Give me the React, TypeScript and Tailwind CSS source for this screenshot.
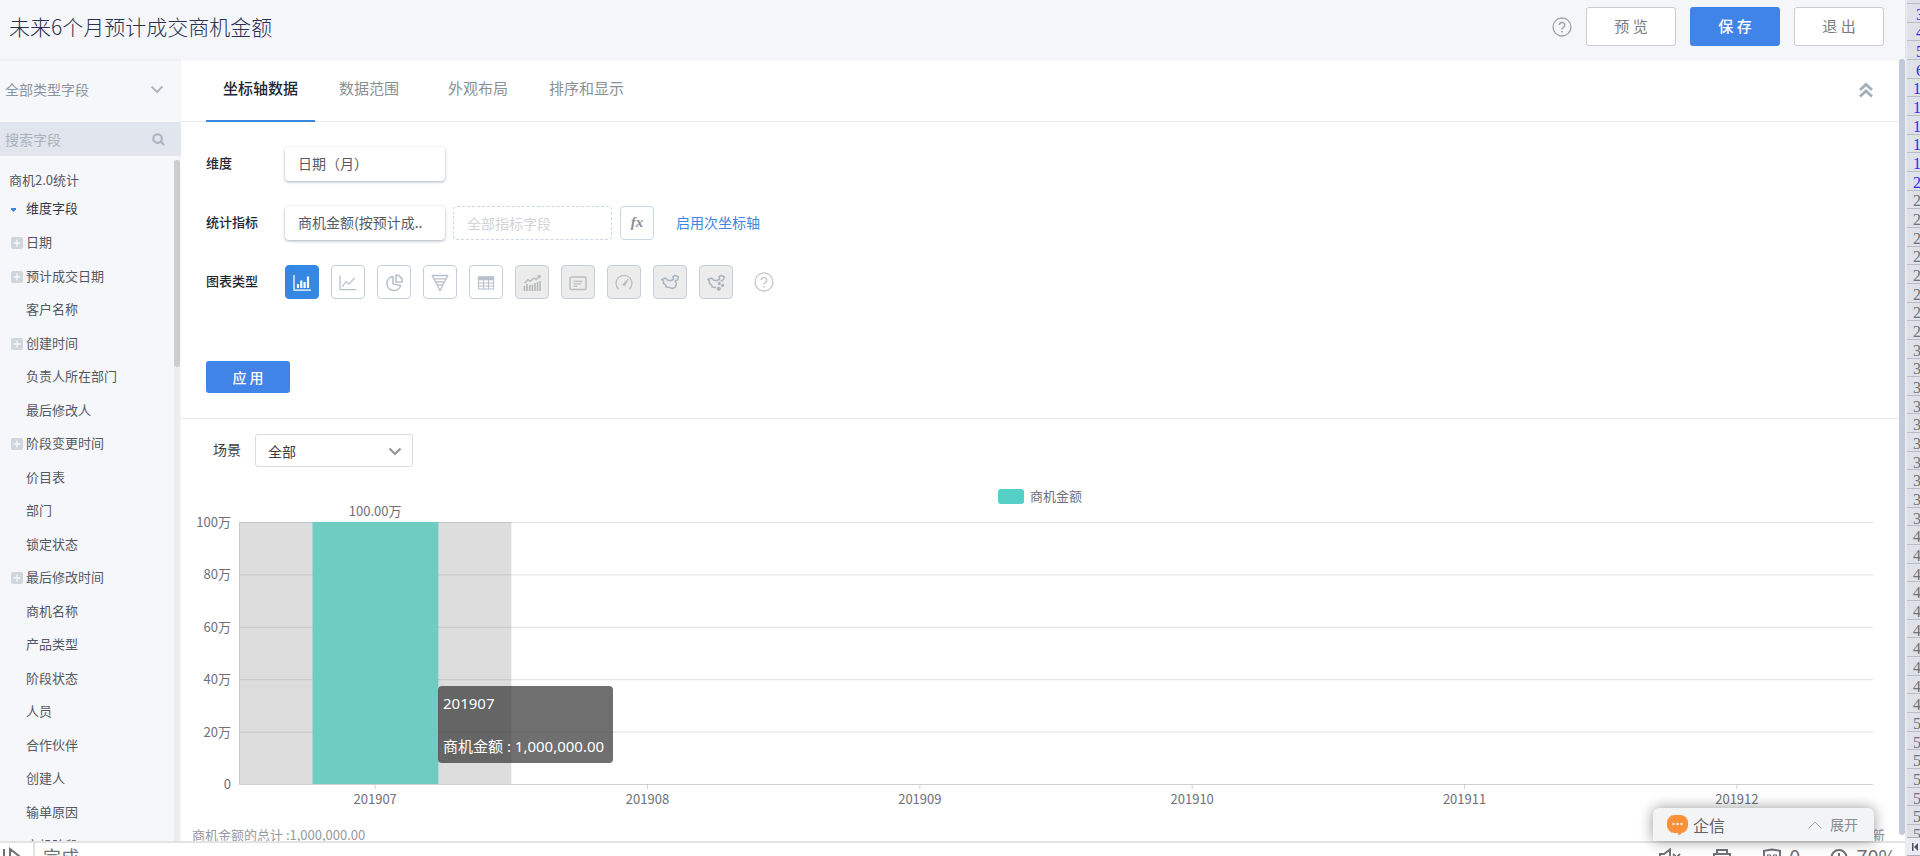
import type { ReactNode } from "react";

type Field = { name: string; expandable?: boolean };

const fields: Field[] = [
  { name: "日期", expandable: true },
  { name: "预计成交日期", expandable: true },
  { name: "客户名称" },
  { name: "创建时间", expandable: true },
  { name: "负责人所在部门" },
  { name: "最后修改人" },
  { name: "阶段变更时间", expandable: true },
  { name: "价目表" },
  { name: "部门" },
  { name: "锁定状态" },
  { name: "最后修改时间", expandable: true },
  { name: "商机名称" },
  { name: "产品类型" },
  { name: "阶段状态" },
  { name: "人员" },
  { name: "合作伙伴" },
  { name: "创建人" },
  { name: "输单原因" },
  { name: "商机阶段" },
];

const tabs = ["坐标轴数据", "数据范围", "外观布局", "排序和显示"];

const months = ["201907", "201908", "201909", "201910", "201911", "201912"];
const ticks = ["100万", "80万", "60万", "40万", "20万", "0"];

const blueRows = ["3", "4", "5", "6", "1", "1", "1", "1", "1", "2"];
const greyRows = [
  ...Array<string>(8).fill("2"),
  ...Array<string>(10).fill("3"),
  ...Array<string>(10).fill("4"),
  ...Array<string>(6).fill("5"),
];

function Icon({ children }: { children: ReactNode }) {
  return (
    <svg
      width="18"
      height="18"
      viewBox="0 0 18 18"
      fill="none"
      stroke="currentColor"
      strokeWidth="1.3"
      strokeLinecap="round"
      strokeLinejoin="round"
      aria-hidden="true"
      className="mt-[2px] shrink-0"
    >
      {children}
    </svg>
  );
}

const chartTypes: { label: string; state: "active" | "normal" | "off"; icon: ReactNode }[] = [
  {
    label: "柱状图",
    state: "active",
    icon: (
      <>
        <path d="M1 1.500v14.700h16.500" />
        <path d="M5 14v-4M8.300 14V6.500M11.600 14V8M15 14V2.500" strokeWidth="2.200" strokeLinecap="butt" />
      </>
    ),
  },
  {
    label: "折线图",
    state: "normal",
    icon: <path d="M1 2v13.600h16M3.500 12.300l3.600-4.600 3 2.400 5-5.800" />,
  },
  {
    label: "饼图",
    state: "normal",
    icon: (
      <g strokeWidth="1.600">
        <path d="M8 2.500A7 7 0 1 0 15.600 11.500L8 10Z" />
        <path d="M11 1V8h6.400A6.500 6.500 0 0 0 11 1Z" />
      </g>
    ),
  },
  {
    label: "漏斗图",
    state: "normal",
    icon: <path d="M1.200 1.500h15.600L9 16.800ZM3 4.800h12M4.600 8h8.800M6.300 11h5.400" />,
  },
  {
    label: "表格",
    state: "normal",
    icon: (
      <>
        <path d="M1.500 3h15v12h-15ZM1.500 9h15M1.500 12h15M6.500 6v9M11.500 6v9" strokeWidth="1.100" />
        <path d="M1.500 3h15v2.500h-15Z" fill="currentColor" />
      </>
    ),
  },
  {
    label: "组合图",
    state: "off",
    icon: (
      <>
        <path d="M2 8.700 5 5.500l2 1.800L11 4l2 1.600L16.600 2.400" strokeWidth="1.500" />
        <circle cx="16.200" cy="2.600" r="1.100" fill="currentColor" />
        <path
          d="M1.500 17v-5M4.100 17v-7M6.700 17v-6M9.300 17v-6.500M11.900 17V9M14.500 17V8M17.100 17V7"
          strokeWidth="1.800"
          strokeLinecap="butt"
        />
      </>
    ),
  },
  {
    label: "指标卡",
    state: "off",
    icon: (
      <>
        <rect x="1" y="3" width="16" height="12.500" rx="1.500" strokeWidth="1.500" />
        <path d="M5 7.300h8M5 9.800h7M5 12.300h3" strokeWidth="1.200" />
      </>
    ),
  },
  {
    label: "仪表盘",
    state: "off",
    icon: (
      <>
        <path d="M3.400 15A8 8 0 1 1 14.600 15" />
        <path d="M7.800 10.800 13 5.400 9.600 11.600Z" fill="currentColor" strokeWidth="1.200" />
      </>
    ),
  },
  {
    label: "地图",
    state: "off",
    icon: (
      <path
        className="text-[#a9b5c1]"
        strokeWidth="1.500"
        d="M.8 5.500 4.500 4 6.500 6l3 .8L12.600 5.300 11.800 2.800 14 1.500 17.300 2.800 16.600 5.600 14.200 7.200 15.600 10 14.200 13.200 11.200 14.600 8.600 13.400 5.200 13 4.600 10.800 2.200 9.200 2.600 7.200Z"
      />
    ),
  },
  {
    label: "标记地图",
    state: "off",
    icon: (
      <g className="text-[#a9b5c1]">
        <path
          strokeWidth="1.500"
          d="M8.600 13.400 5.200 13 4.600 10.800 2.200 9.200 2.600 7.200.8 5.500 4.500 4 6.500 6l3 .8L12.600 5.300 11.800 2.800 14 1.500 17.300 2.800 16.600 5.600 14.200 7"
        />
        <circle cx="12.200" cy="9.400" r=".9" fill="currentColor" />
        <circle cx="15.600" cy="11.400" r="1" fill="currentColor" />
        <circle cx="11.800" cy="14.800" r="1.400" fill="currentColor" />
      </g>
    ),
  },
];

const chartStyles = {
  active: "bg-[#3487e2] border-[#3487e2] text-white",
  normal: "bg-white border-[#c3cfdc] text-[#b9c2cb]",
  off: "bg-[#ececec] border-[#c3cfdc] text-[#bbbdbf]",
};

function Help({ className }: { className: string }) {
  return (
    <button type="button" aria-label="帮助" className={className}>
      <svg width="20" height="20" viewBox="0 0 20 20" fill="none" stroke="currentColor" strokeWidth="1.300">
        <circle cx="10" cy="10" r="9" />
        <path d="M7.300 8.100a2.700 2.700 0 1 1 4.200 2.200c-1 .7-1.500 1.100-1.500 2.300M10 14v1.400" strokeWidth="1.600" />
      </svg>
    </button>
  );
}

function Chevron({ className }: { className: string }) {
  return (
    <svg width="14" height="14" viewBox="0 0 14 14" fill="none" stroke="currentColor" strokeWidth="2.200" className={className}>
      <path d="M1.500 4.500 7 10l5.500-5.500" />
    </svg>
  );
}

function Sidebar() {
  return (
    <aside className="flex w-[181px] shrink-0 flex-col bg-[#f6f7fa]">
      <button type="button" className="flex h-[63px] shrink-0 items-center justify-between pr-[17px] pb-[3px] pl-[5px] text-sm text-[#8d93a0]">
        全部类型字段
        <Chevron className="text-[#b0b9c3]" />
      </button>
      <label className="flex h-[34px] shrink-0 items-center bg-[#e0e5ee] pr-4 pl-[5px]">
        <input
          type="text"
          aria-label="搜索字段"
          placeholder="搜索字段"
          className="w-0 flex-1 bg-transparent text-sm outline-none placeholder:text-[#aab2bd]"
        />
        <svg width="13" height="13" viewBox="0 0 14 14" fill="none" stroke="#aab4bf" strokeWidth="2.300">
          <circle cx="6" cy="6" r="4.600" />
          <path d="M9.500 9.500l3.600 3.600" />
        </svg>
      </label>
      <div className="flex min-h-0 flex-1 overflow-hidden pt-1">
        <div className="min-w-0 flex-1 pt-[5px] text-[13px] text-[#545861]">
          <div className="flex h-[30px] items-center pl-[9px]">商机2.0统计</div>
          <div className="mb-1 flex h-[26px] items-center gap-[10px] pl-[11px] text-[#33373f]">
            <svg width="5" height="4" viewBox="0 0 5 4" fill="#3a87e0" className="mt-1">
              <path d="M0 0h5v1.500L2.500 4 0 1.500Z" />
            </svg>
            维度字段
          </div>
          <ul>
            {fields.map((f) => (
              <li key={f.name} className="flex items-center gap-[3px] pl-[11px] odd:h-[34px] even:h-[33px]">
                <span className="flex w-3 justify-center">
                  {f.expandable && (
                    <svg width="12" height="12" viewBox="0 0 12 12" className="mt-[2px]">
                      <rect width="12" height="12" rx="2" fill="#d0d6dd" />
                      <path d="M6 2.500v7M2.500 6h7" stroke="#f6f7fa" strokeWidth="1.400" />
                    </svg>
                  )}
                </span>
                {f.name}
              </li>
            ))}
          </ul>
        </div>
        <div className="mr-px w-[6px] bg-[#ededee]">
          <div className="h-[207px] rounded-full bg-[#cdcdcd]" />
        </div>
      </div>
    </aside>
  );
}

function RowLabel({ children }: { children: ReactNode }) {
  return <span className="w-[79px] pb-[2px] font-medium text-[#222730]">{children}</span>;
}

function Config() {
  return (
    <section className="shrink-0 border-b border-[#e9ebed] pb-[25px]">
      <div className="flex h-[63px] items-stretch justify-between border-b border-[#e9ebed] pr-[26px] pl-[25px]">
        <nav className="-mb-px flex text-[15px]">
          {tabs.map((t, i) => (
            <a
              key={t}
              href="#"
              className={
                i === 0
                  ? "mr-1 flex border-b-2 border-[#3a87e0] px-[17px] pt-[18px] leading-[22px] font-medium text-[#222730]"
                  : "flex px-5 pt-[18px] leading-[22px] text-[#8b9096] nth-[3]:px-[29px] last:px-3"
              }
            >
              {t}
            </a>
          ))}
        </nav>
        <button type="button" aria-label="收起" className="text-[#a3b0ba]">
          <svg width="14" height="16" viewBox="0 0 14 16" fill="none" stroke="currentColor" strokeWidth="2.800">
            <path d="M1 8l6-5.600L13 8M1 14.600 7 9l6 5.600" />
          </svg>
        </button>
      </div>

      <div className="flex flex-col gap-[25px] pt-[25px] pl-[25px] text-[13px] text-[#555b66]">
        <div className="flex h-[34px] items-center">
          <RowLabel>维度</RowLabel>
          <button type="button" className="h-[34px] w-[160px] rounded bg-white px-[13px] pb-[2px] text-left font-['Noto_Sans_CJK_TC',sans-serif] text-sm shadow-[0_1px_3px_rgba(60,75,95,0.45)]">
            日期（月）
          </button>
        </div>
        <div className="flex h-[34px] items-center">
          <RowLabel>统计指标</RowLabel>
          <button type="button" className="h-[34px] w-[160px] rounded bg-white px-[13px] pb-[2px] text-left text-sm whitespace-nowrap shadow-[0_1px_3px_rgba(60,75,95,0.45)]">
            商机金额(按预计成..
          </button>
          <input
            type="text"
            aria-label="全部指标字段"
            placeholder="全部指标字段"
            className="ml-2 h-[34px] w-[159px] rounded-sm border border-dashed border-[#ccd6e4] px-[13px] text-sm placeholder:text-[#d0d3d8]"
          />
          <button type="button" className="ml-2 h-[34px] w-[34px] rounded-sm border border-[#c9d6e6] pb-[2px] font-['Liberation_Serif',serif] text-[15px] font-bold text-[#8b8f95] italic">
            fx
          </button>
          <a href="#" className="ml-[22px] pb-[2px] text-sm text-[#3a87e0]">
            启用次坐标轴
          </a>
        </div>
        <div className="flex h-[34px] items-center">
          <RowLabel>图表类型</RowLabel>
          <div className="flex items-center gap-3">
            {chartTypes.map((c) => (
              <button
                key={c.label}
                type="button"
                aria-label={c.label}
                className={`flex h-[34px] w-[34px] items-center justify-center rounded border ${chartStyles[c.state]}`}
              >
                <Icon>{c.icon}</Icon>
              </button>
            ))}
          </div>
          <Help className="ml-[21px] text-[#c9c9c9]" />
        </div>
      </div>
      <button type="button" className="mt-[62px] ml-[25px] block h-8 w-[84px] rounded-[3px] bg-[#4084e8] text-sm font-medium text-white">
        应 用
      </button>
    </section>
  );
}

function Chart() {
  return (
    <div className="relative mr-[26px] ml-[58px] text-[13px]">
      <svg width="100%" height="300" className="block overflow-visible" fontSize="13" fill="#6e7079">
        {ticks.map((t, i) => (
          <g key={t}>
            <line x1="0" x2="100%" y1={i * 52.4 + 0.5} y2={i * 52.4 + 0.5} stroke={i === 5 ? "#cfd0d2" : "#dedede"} />
            <text x="-8" y={i * 52.4 + 5} textAnchor="end">
              {t}
            </text>
          </g>
        ))}
        <line x1="0.5" x2="0.5" y1="0" y2="262" stroke="#e0e0e0" />
        <rect width="16.667%" height="262" fill="#969696" fillOpacity="0.32" />
        <rect x="4.5%" width="7.700%" height="262" fill="#6fccc3" />
        <text x="8.330%" y="-6" textAnchor="middle">
          100.00万
        </text>
        {months.map((m, i) => (
          <g key={m}>
            <line
              x1={`${(i + 0.5) * 16.667}%`}
              x2={`${(i + 0.5) * 16.667}%`}
              y1="262"
              y2="267"
              stroke="#cfd0d2"
            />
            <text x={`${(i + 0.5) * 16.667}%`} y="282" textAnchor="middle">
              {m}
            </text>
          </g>
        ))}
      </svg>
      <div className="absolute top-[164px] left-[199px] flex h-[77px] w-[175px] flex-col justify-between rounded bg-[#323232]/70 px-[5px] py-[5px] font-['Noto_Sans','Noto_Sans_CJK_SC',sans-serif] text-[15px] leading-[24px] whitespace-nowrap text-white">
        <span>201907</span>
        <span>商机金额 : 1,000,000.00</span>
      </div>
    </div>
  );
}

function StatusBar() {
  return (
    <footer className="flex h-[15px] shrink-0 items-start overflow-hidden border-t-2 border-[#e3e3e4] bg-white text-[#717276]">
      <div className="flex h-[26px] w-[35px] shrink-0 items-center border-r-2 border-[#e3e3e4]">
        <svg width="20" height="18" viewBox="0 0 20 18" fill="none" stroke="currentColor" strokeWidth="2">
          <path d="M4 2v14M10 2v14l9-7Z" />
        </svg>
      </div>
      <span className="flex-1 pl-2 text-lg leading-[26px]">完成</span>
      <div className="flex shrink-0 items-center gap-2 pt-1 pr-2 text-xl leading-[20px]">
        <svg width="22" height="18" viewBox="0 0 22 18" fill="none" stroke="currentColor" strokeWidth="2" className="mr-6">
          <path d="M1 6h4l6-4.500v15L5 12H1ZM14 6l7 7M21 6l-7 7" />
        </svg>
        <svg width="18" height="18" viewBox="0 0 18 18" fill="none" stroke="currentColor" strokeWidth="2" className="mr-6">
          <path d="M4 5.500V2h10v3.500M4 14H1V6h16v8h-3M5 11h8v6H5Z" />
        </svg>
        <svg width="18" height="18" viewBox="0 0 18 18" fill="none" stroke="currentColor" strokeWidth="2">
          <path d="M9 1.500 1 2.800v6c0 4 4 7 8 8.200 4-1.200 8-4.200 8-8.200v-6Z" />
          <path d="M4.500 7h3v3h-3ZM10.500 7h3v3h-3Z" strokeWidth="1.200" />
        </svg>
        <span className="mr-[22px]">0</span>
        <svg width="18" height="18" viewBox="0 0 18 18" fill="none" stroke="currentColor" strokeWidth="2">
          <circle cx="9" cy="9.500" r="7.500" />
          <path d="M9 5v5.500h4" />
        </svg>
        <span>70%</span>
      </div>
    </footer>
  );
}

function MessageDock() {
  return (
    <div className="absolute right-[31px] bottom-[15px] flex h-[33px] w-[221px] items-center rounded-t-md bg-[#f3f4f6] pr-4 pl-[14px] shadow-[0_0_14px_rgba(0,0,0,0.4)]">
      <svg width="21" height="20" viewBox="0 0 21 20">
        <path
          d="M7.500 0h6a7.500 7.500 0 0 1 7.500 7.500v3a7.500 7.500 0 0 1-6.500 7.400C14 19.200 12.500 20 11 20l.3-2H7.500A7.500 7.500 0 0 1 0 10.500v-3A7.500 7.500 0 0 1 7.500 0Z"
          fill="#fd9139"
        />
        <path d="M5.500 9h2M9.500 9h2M13.500 9h2" stroke="#fff" strokeWidth="2" />
      </svg>
      <span className="ml-[5px] flex-1 text-base text-[#606266]">企信</span>
      <button type="button" className="flex items-center gap-2 text-sm text-[#8c8e92]">
        <svg width="14" height="8" viewBox="0 0 14 8" fill="none" stroke="#a5a7ab">
          <path d="M.5 7.500 7 1l6.500 6.500" />
        </svg>
        <span className="pb-[2px]">展开</span>
      </button>
    </div>
  );
}

function SheetEdge() {
  return (
    <div
      aria-hidden="true"
      className="flex w-[15px] shrink-0 flex-col overflow-hidden border-l-2 border-[#e9ebee] bg-[#dee1e7] font-['Liberation_Serif',serif] text-base"
    >
      <div className="h-1 shrink-0 border-b border-[#b9bdc6]" />
      <div className="grid min-h-0 flex-1 auto-rows-fr">
        {blueRows.map((n, i) => (
          <div
            key={i}
            className={`flex min-h-0 items-center border-b border-[#b9bdc6] pt-[3px] leading-[15px] text-[#2f2ff5] ${i < 4 ? "pl-[9px]" : "pl-[6px]"}`}
          >
            {n}
          </div>
        ))}
        {greyRows.map((n, i) => (
          <div key={i} className="flex min-h-0 items-center border-b border-[#b9bdc6] pt-[3px] pl-[6px] leading-[15px] text-[#6f7277]">
            {n}
          </div>
        ))}
      </div>
      <div className="h-3 shrink-0 overflow-hidden pl-[6px] leading-5 text-[#6f7277]">5</div>
      <div className="flex h-[19px] shrink-0 items-center border-y border-[#a8afbd] bg-[#e9ecf2] pl-[5px]">
        <svg width="6" height="8" viewBox="0 0 6 8" fill="#4d5460">
          <path d="M0 0h1.500v8H0ZM6 0v8L2 4Z" />
        </svg>
      </div>
    </div>
  );
}

export default function App() {
  return (
    <div className="flex h-screen overflow-hidden bg-white font-['Noto_Sans_CJK_SC',sans-serif]">
      <div className="relative flex min-w-0 flex-1 flex-col">
        <header className="z-10 flex h-[59px] shrink-0 items-center bg-[#f4f6fa] pr-[21px] pb-[6px] pl-[9px] shadow-[0_1px_3px_rgba(0,0,0,0.06)]">
          <h1 className="flex-1 text-[21px] font-light text-[#2b3050]">未来6个月预计成交商机金额</h1>
          <Help className="mr-[14px] text-[#a3a3a5]" />
          <div className="flex gap-[14px] text-[15px]">
            <button type="button" className="h-[39px] w-[90px] rounded-[3px] border border-[#cbcccf] bg-white text-[#7a7c80]">
              预 览
            </button>
            <button type="button" className="h-[39px] w-[90px] rounded-[3px] bg-[#4084e8] font-medium text-white">
              保 存
            </button>
            <button type="button" className="h-[39px] w-[90px] rounded-[3px] border border-[#cbcccf] bg-white text-[#7a7c80]">
              退 出
            </button>
          </div>
        </header>

        <div className="flex min-h-0 flex-1">
          <Sidebar />
          <main className="flex min-w-0 flex-1 flex-col overflow-hidden">
            <Config />
            <div className="flex items-center gap-[14px] pt-[15px] pl-8 text-sm text-[#3a3d42]">
              <label htmlFor="scene" className="pb-[3px]">
                场景
              </label>
              <div className="relative flex items-center">
                <select id="scene" className="h-[33px] w-[158px] appearance-none rounded-[3px] border border-[#d9dadc] bg-white px-3 text-sm">
                  <option>全部</option>
                </select>
                <Chevron className="pointer-events-none absolute right-[11px] text-[#96989b]" />
              </div>
            </div>
            <div className="mt-5 mb-[17px] flex h-[18px] items-center justify-center gap-[6px] text-[13px] text-[#6e7079]">
              <span className="h-[15px] w-[26px] rounded-[3px] bg-[#55d0c6]" />
              商机金额
            </div>
            <Chart />
            <div className="flex shrink-0 justify-between pr-[14px] pl-[11px] text-[13px] leading-[26px] text-[#96999e]">
              <span>商机金额的总计 :1,000,000.00</span>
              <span>刷新</span>
            </div>
          </main>
          <div className="flex w-[6px] shrink-0 flex-col">
            <div className="mb-[6px] flex-1 rounded-full bg-[#c2cbda]" />
          </div>
        </div>
        <StatusBar />
        <MessageDock />
      </div>
      <SheetEdge />
    </div>
  );
}
